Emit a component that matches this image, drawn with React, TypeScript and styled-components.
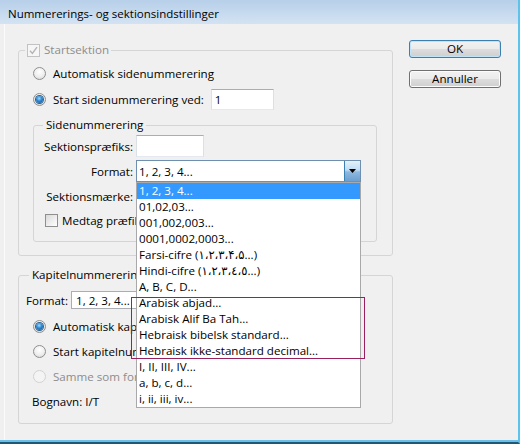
import React from "react";
import styled, { createGlobalStyle, css } from "styled-components";

const GlobalStyle = createGlobalStyle`
  html, body { margin: 0; padding: 0; background: #f0f0f0; }
  body {
    font-family: "Open Sans", "Noto Sans", "DejaVu Sans", sans-serif;
    font-size: 11.6px;
    color: #000;
  }
  * { box-sizing: border-box; }
`;

const Window = styled.div`
  width: 520px;
  height: 444px;
  display: flex;
  flex-direction: column;
  background: #f0f0f0;
  border-right: 2px solid #5bc3ec;
  border-bottom: 2px solid #1f5877;
  box-shadow: inset 0 -2px 0 #6cc0e8;
  overflow: hidden;
`;

const TitleBar = styled.div`
  height: 24px;
  flex: none;
  display: flex;
  align-items: center;
  padding: 2px 0 0 8px;
  font-size: 11.5px;
  color: #000;
  background: linear-gradient(#b7cfe9, #d3e3f3);
  white-space: nowrap;
`;

const Body = styled.div`
  flex: 1;
  display: flex;
  margin: 0 0 2px 4px;
  border-left: 1px solid #fbfbfb;
  padding: 16px 0 0 13px;
`;

const Main = styled.div`
  width: 375px;
  flex: none;
  display: flex;
  flex-direction: column;
  padding-top: 2px;
`;

const Side = styled.div`
  margin-left: 16px;
  display: flex;
  flex-direction: column;
  gap: 12px;
`;

const Button = styled.button<{ $default?: boolean }>`
  width: 92px;
  height: 18px;
  padding: 0;
  font: inherit;
  color: #000;
  line-height: 14px;
  border-radius: 3px;
  border: 1px solid ${(p) => (p.$default ? "#3c7fb1" : "#707070")};
  background: linear-gradient(#f2f2f2 0%, #ebebeb 50%, #dddddd 51%, #cfcfcf 100%);
  box-shadow: inset 0 0 0 1px ${(p) => (p.$default ? "#bfe4fa" : "#fcfcfc")};
`;

const Group = styled.fieldset<{ $width?: number; $mt?: number }>`
  margin: ${(p) => p.$mt ?? 0}px 0 0 0;
  padding: 0;
  min-width: 0;
  width: ${(p) => (p.$width ? `${p.$width}px` : "auto")};
  border: 1px solid #d5d5d5;
  border-radius: 3px;
`;

const Legend = styled.legend<{ $ml: number; $muted?: boolean; $pad?: number }>`
  margin-left: ${(p) => p.$ml}px;
  padding: 0 ${(p) => p.$pad ?? 3}px;
  height: 16px;
  line-height: 16px;
  display: flex;
  align-items: center;
  gap: 4px;
  white-space: nowrap;
  color: ${(p) => (p.$muted ? "#8d8d8d" : "#000")};
`;

const StartContent = styled.div`
  display: flex;
  flex-direction: column;
  padding: 3px 15px 13px 14px;
`;

const ChoiceRow = styled.div<{ $mt?: number; $muted?: boolean }>`
  height: 24px;
  margin-top: ${(p) => p.$mt ?? 0}px;
  display: flex;
  align-items: center;
  gap: 7px;
  white-space: nowrap;
  color: ${(p) => (p.$muted ? "#8d8d8d" : "#000")};
`;

const RadioCircle = styled.span<{ $checked?: boolean; $disabled?: boolean }>`
  position: relative;
  flex: none;
  width: 13px;
  height: 13px;
  border-radius: 50%;
  border: 1px solid ${(p) => (p.$disabled ? "#d2d2d2" : "#8e8f8f")};
  background: ${(p) =>
    p.$disabled
      ? "#f4f4f4"
      : "radial-gradient(circle at 50% 35%, #ffffff 0%, #eeeeee 55%, #d0d0d0 100%)"};
  ${(p) =>
    p.$checked &&
    css`
      &::after {
        content: "";
        position: absolute;
        inset: 2px;
        border-radius: 50%;
        background: radial-gradient(circle at 45% 35%, #9fdcff 0%, #2b86d0 45%, #0e4f8c 100%);
        box-shadow: 0 0 0 1px #2b5f8f;
      }
    `}
`;

const CheckBox = styled.span<{ $disabled?: boolean }>`
  flex: none;
  width: 13px;
  height: 13px;
  display: flex;
  align-items: center;
  justify-content: center;
  border: 1px solid ${(p) => (p.$disabled ? "#c2c2c2" : "#8e8f8f")};
  background: ${(p) =>
    p.$disabled ? "#f6f6f6" : "linear-gradient(135deg, #d9d9d9 0%, #f4f4f4 70%, #ffffff 100%)"};
`;

const TextBox = styled.div<{ $w: number; $h?: number }>`
  width: ${(p) => p.$w}px;
  height: ${(p) => p.$h ?? 22}px;
  flex: none;
  display: flex;
  align-items: center;
  padding: 0 3px;
  background: #fff;
  border: 1px solid #dbdfe6;
  border-top-color: #abadb3;
  border-bottom-color: #e3e9ef;
`;

const InnerContent = styled.div`
  display: grid;
  grid-template-columns: 99px 1fr;
  column-gap: 3px;
  row-gap: 3px;
  align-items: center;
  justify-items: start;
  padding: 2px 0 11px 0;
`;

const FieldLabel = styled.span`
  justify-self: end;
  white-space: nowrap;
`;

const CheckRow = styled.div`
  grid-column: 1 / -1;
  height: 20px;
  padding-left: 11px;
  display: flex;
  align-items: center;
  gap: 4px;
  white-space: nowrap;
`;

const SelectBox = styled.div<{ $w: number; $h?: number; $focus?: boolean }>`
  position: relative;
  width: ${(p) => p.$w}px;
  height: ${(p) => p.$h ?? 22}px;
  flex: none;
  display: flex;
  align-items: stretch;
  background: #fff;
  border: 1px solid ${(p) => (p.$focus ? "#6e8fb0" : "#abadb3")};
`;

const SelectValue = styled.span<{ $pl?: number }>`
  flex: 1;
  display: flex;
  align-items: center;
  padding-left: ${(p) => p.$pl ?? 2}px;
  white-space: nowrap;
  overflow: hidden;
`;

const ArrowButton = styled.span`
  width: 16px;
  flex: none;
  display: flex;
  align-items: center;
  justify-content: center;
  border-left: 1px solid #3c7fb1;
  background: linear-gradient(#e3f1fb 0%, #c0dcf3 45%, #8db8e0 55%, #6d9fd0 100%);
`;

const ListBox = styled.div`
  position: absolute;
  top: calc(100% + 1px);
  left: -1px;
  width: 225px;
  z-index: 10;
  background: #fff;
  border: 1px solid #a9a9a9;
`;

const Option = styled.div<{ $selected?: boolean }>`
  height: 16px;
  line-height: 16px;
  padding-left: 2px;
  white-space: nowrap;
  overflow: hidden;
  background: ${(p) => (p.$selected ? "#3399ff" : "transparent")};
  color: ${(p) => (p.$selected ? "#fff" : "#000")};
`;

const Highlight = styled.div`
  position: absolute;
  top: 114px;
  left: -6px;
  width: 234px;
  height: 62px;
  border: 1px solid #98205f;
  pointer-events: none;
`;

const ChapterContent = styled.div`
  display: flex;
  flex-direction: column;
  padding: 7px 0 10px 7px;
`;

const FormatRow = styled.div`
  height: 20px;
  display: flex;
  align-items: center;
  gap: 3px;
  white-space: nowrap;
`;

const ChapterChoices = styled.div`
  display: flex;
  flex-direction: column;
  gap: 1px;
  margin-top: 4px;
  padding-left: 7px;
`;

const InfoRow = styled.div`
  height: 24px;
  display: flex;
  align-items: center;
  margin-left: -1px;
  white-space: nowrap;
`;

const formats = [
  "1, 2, 3, 4...",
  "01,02,03...",
  "001,002,003...",
  "0001,0002,0003...",
  "Farsi-cifre (\u06F1\u060C\u06F2\u060C\u06F3\u060C\u06F4\u060C\u06F5...)",
  "Hindi-cifre (\u0661\u060C\u0662\u060C\u0663\u060C\u0664\u060C\u0665...)",
  "A, B, C, D...",
  "Arabisk abjad...",
  "Arabisk Alif Ba Tah...",
  "Hebraisk bibelsk standard...",
  "Hebraisk ikke-standard decimal...",
  "I, II, III, IV...",
  "a, b, c, d...",
  "i, ii, iii, iv...",
];

const Check = () => (
  <svg width="9" height="9" viewBox="0 0 9 9">
    <path d="M1 4.8 L3.4 7.4 L8 1.2" fill="none" stroke="#b4b4b4" strokeWidth="1.4" />
  </svg>
);

const Arrow = () => (
  <svg width="7" height="4" viewBox="0 0 7 4">
    <path d="M0 0 H7 L3.5 4 Z" fill="#000" />
  </svg>
);

export default function App() {
  return (
    <>
      <GlobalStyle />
      <Window>
        <TitleBar>Nummererings- og sektionsindstillinger</TitleBar>
        <Body>
          <Main>
            <Group>
              <Legend $ml={6} $pad={2} $muted>
                <CheckBox $disabled>
                  <Check />
                </CheckBox>
                Startsektion
              </Legend>
              <StartContent>
                <ChoiceRow>
                  <RadioCircle />
                  Automatisk sidenummerering
                </ChoiceRow>
                <ChoiceRow $mt={2}>
                  <RadioCircle $checked />
                  Start sidenummerering ved:
                  <TextBox $w={63} $h={21}>1</TextBox>
                </ChoiceRow>
                <Group $width={344} $mt={6}>
                  <Legend $ml={9}>Sidenummerering</Legend>
                  <InnerContent>
                    <FieldLabel>Sektionspræfiks:</FieldLabel>
                    <TextBox $w={68} />
                    <FieldLabel>Format:</FieldLabel>
                    <SelectBox $w={225} $focus>
                      <SelectValue>1, 2, 3, 4...</SelectValue>
                      <ArrowButton>
                        <Arrow />
                      </ArrowButton>
                      <ListBox>
                        {formats.map((f, i) => (
                          <Option key={f} $selected={i === 0}>
                            {f}
                          </Option>
                        ))}
                        <Highlight />
                      </ListBox>
                    </SelectBox>
                    <FieldLabel>Sektionsmærke:</FieldLabel>
                    <TextBox $w={140} />
                    <CheckRow>
                      <CheckBox />
                      Medtag præfiks ved nummerering
                    </CheckRow>
                  </InnerContent>
                </Group>
              </StartContent>
            </Group>

            <Group $mt={11}>
              <Legend $ml={10}>Kapitelnummerering</Legend>
              <ChapterContent>
                <FormatRow>
                  Format:
                  <SelectBox $w={200} $h={18}>
                    <SelectValue $pl={4}>1, 2, 3, 4...</SelectValue>
                  </SelectBox>
                </FormatRow>
                <ChapterChoices>
                  <ChoiceRow>
                    <RadioCircle $checked />
                    Automatisk kapitelnummerering
                  </ChoiceRow>
                  <ChoiceRow>
                    <RadioCircle />
                    Start kapitelnummerering ved:
                  </ChoiceRow>
                  <ChoiceRow $muted>
                    <RadioCircle $disabled />
                    Samme som forrige dokument i bogen
                  </ChoiceRow>
                  <InfoRow>Bognavn: I/T</InfoRow>
                </ChapterChoices>
              </ChapterContent>
            </Group>
          </Main>
          <Side>
            <Button $default>OK</Button>
            <Button>Annuller</Button>
          </Side>
        </Body>
      </Window>
    </>
  );
}
